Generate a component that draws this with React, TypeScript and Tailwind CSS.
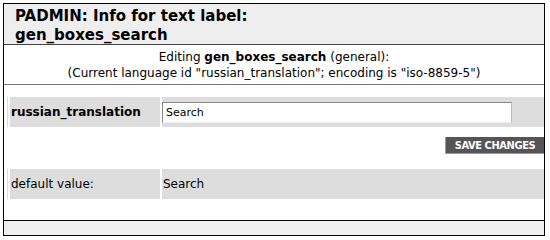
export default function App() {
  return (
    <div className="w-[550px] h-[240px] bg-white pt-[3px] pl-[3px] font-['DejaVu_Sans',Verdana,sans-serif] text-black">
      <div className="w-[542px] border border-black">
        <div className="h-[41px] bg-[#eeeeee] border-b border-[#444444] px-[11px] pt-[3px] text-[15px] font-bold leading-[19px]">
          <div>PADMIN: Info for text label:</div>
          <div>gen_boxes_search</div>
        </div>
        <div className="h-[40px] border-b border-[#777777] pt-[4px] text-center text-[12px] leading-[16px]">
          <div>
            Editing <b>gen_boxes_search</b> (general):
          </div>
          <div>(Current language id "russian_translation"; encoding is "iso-8859-5")</div>
        </div>
        <div className="h-[135px] pt-[12px] pl-[3px]">
          <div className="flex h-[30px] border-l border-[#dddddd] pl-[2px] gap-[2px]">
            <div className="w-[150px] bg-[#dddddd] flex items-center pl-[1px] text-[12px] font-bold">
              russian_translation
            </div>
            <div className="flex-1 bg-[#dddddd] flex items-center">
              <input
                type="text"
                defaultValue="Search"
                className="w-[350px] h-[21px] bg-white border border-t-[#888888] border-l-[#888888] border-b-[#eeeeee] border-r-[#bbbbbb] px-[3px] text-[11px] outline-none"
              />
            </div>
          </div>
          <div className="flex justify-end h-[42px] pt-[10px]">
            <button className="w-[99px] h-[17px] bg-[#555555] border-l border-b border-[#999999] text-white text-[11px] font-bold font-['DejaVu_Sans_Condensed','DejaVu_Sans',sans-serif] leading-[15px] tracking-[-0.4px]">
              SAVE CHANGES
            </button>
          </div>
          <div className="flex h-[30px] border-l border-[#dddddd] pl-[2px] gap-[2px]">
            <div className="w-[150px] bg-[#dddddd] flex items-center pl-[1px] text-[12px]">
              default value:
            </div>
            <div className="flex-1 bg-[#dddddd] flex items-center pl-[1px] text-[12px]">
              Search
            </div>
          </div>
        </div>
        <div className="h-[15px] bg-[#eeeeee] border-t border-black"></div>
      </div>
    </div>
  );
}
